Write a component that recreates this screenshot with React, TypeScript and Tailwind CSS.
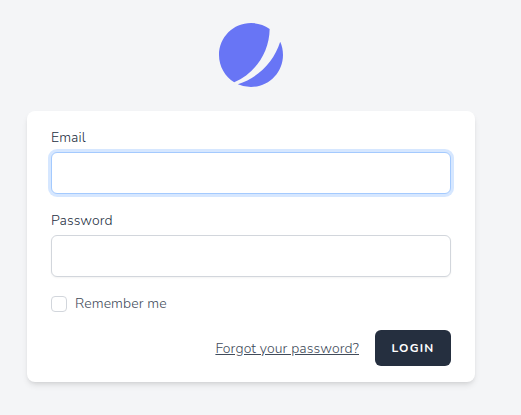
import React from 'react';

const labelClass = 'block font-[360] tracking-[0.1px]';

const inputClass =
  'block w-full h-[42px] mt-[4px] px-3 bg-white border rounded-md outline-none';

const Logo: React.FC = () => (
  <svg className="size-16" viewBox="0 0 48 48" fill="none">
    <path
      d="M11.395 44.428C4.557 40.198 0 32.632 0 24 0 10.745 10.745 0 24 0a23.891 23.891 0 0113.997 4.502c-.2 17.907-11.097 33.245-26.602 39.926z"
      fill="#6875F5"
    />
    <path
      d="M14.134 45.885A23.914 23.914 0 0024 48c13.255 0 24-10.745 24-24 0-3.516-.756-6.856-2.115-9.866-4.659 15.143-16.608 27.092-31.75 31.751z"
      fill="#6875F5"
    />
  </svg>
);

export default function App() {
  return (
    <div className="min-h-screen flex flex-col items-center pt-[23px] pr-[19px] bg-[#f4f5f7] font-['Nunito','Open_Sans',sans-serif] text-[14px] leading-[21px] text-[#252f3f]">
      <Logo />
      <form className="w-[448px] h-[271px] mt-6 px-6 py-4 bg-white rounded-lg shadow-md">
        <div>
          <label htmlFor="email" className={labelClass}>Email</label>
          <input
            id="email"
            type="email"
            className={`${inputClass} border-[#a4cafe] ring-3 ring-[#a4cafe]/45`}
          />
        </div>

        <div className="mt-4">
          <label htmlFor="password" className={labelClass}>Password</label>
          <input
            id="password"
            type="password"
            className={`${inputClass} border-[#d2d6dc] shadow-xs`}
          />
        </div>

        <label className="flex items-center mt-4">
          <input type="checkbox" className="appearance-none size-4 border border-[#d2d6dc] rounded bg-white" />
          <span className="ml-2 font-[360] tracking-[0.1px] text-[#414b5a]">Remember me</span>
        </label>

        <div className="flex items-center justify-end mt-4">
          <a href="#" className="underline font-[360] tracking-[0.12px] text-[#414b5a]">Forgot your password?</a>
          <button
            type="button"
            className="ml-4 w-[76px] h-9 rounded-md bg-[#252f3f] text-white text-[12px] font-[670] tracking-widest uppercase"
          >
            Login
          </button>
        </div>
      </form>
    </div>
  );
}
